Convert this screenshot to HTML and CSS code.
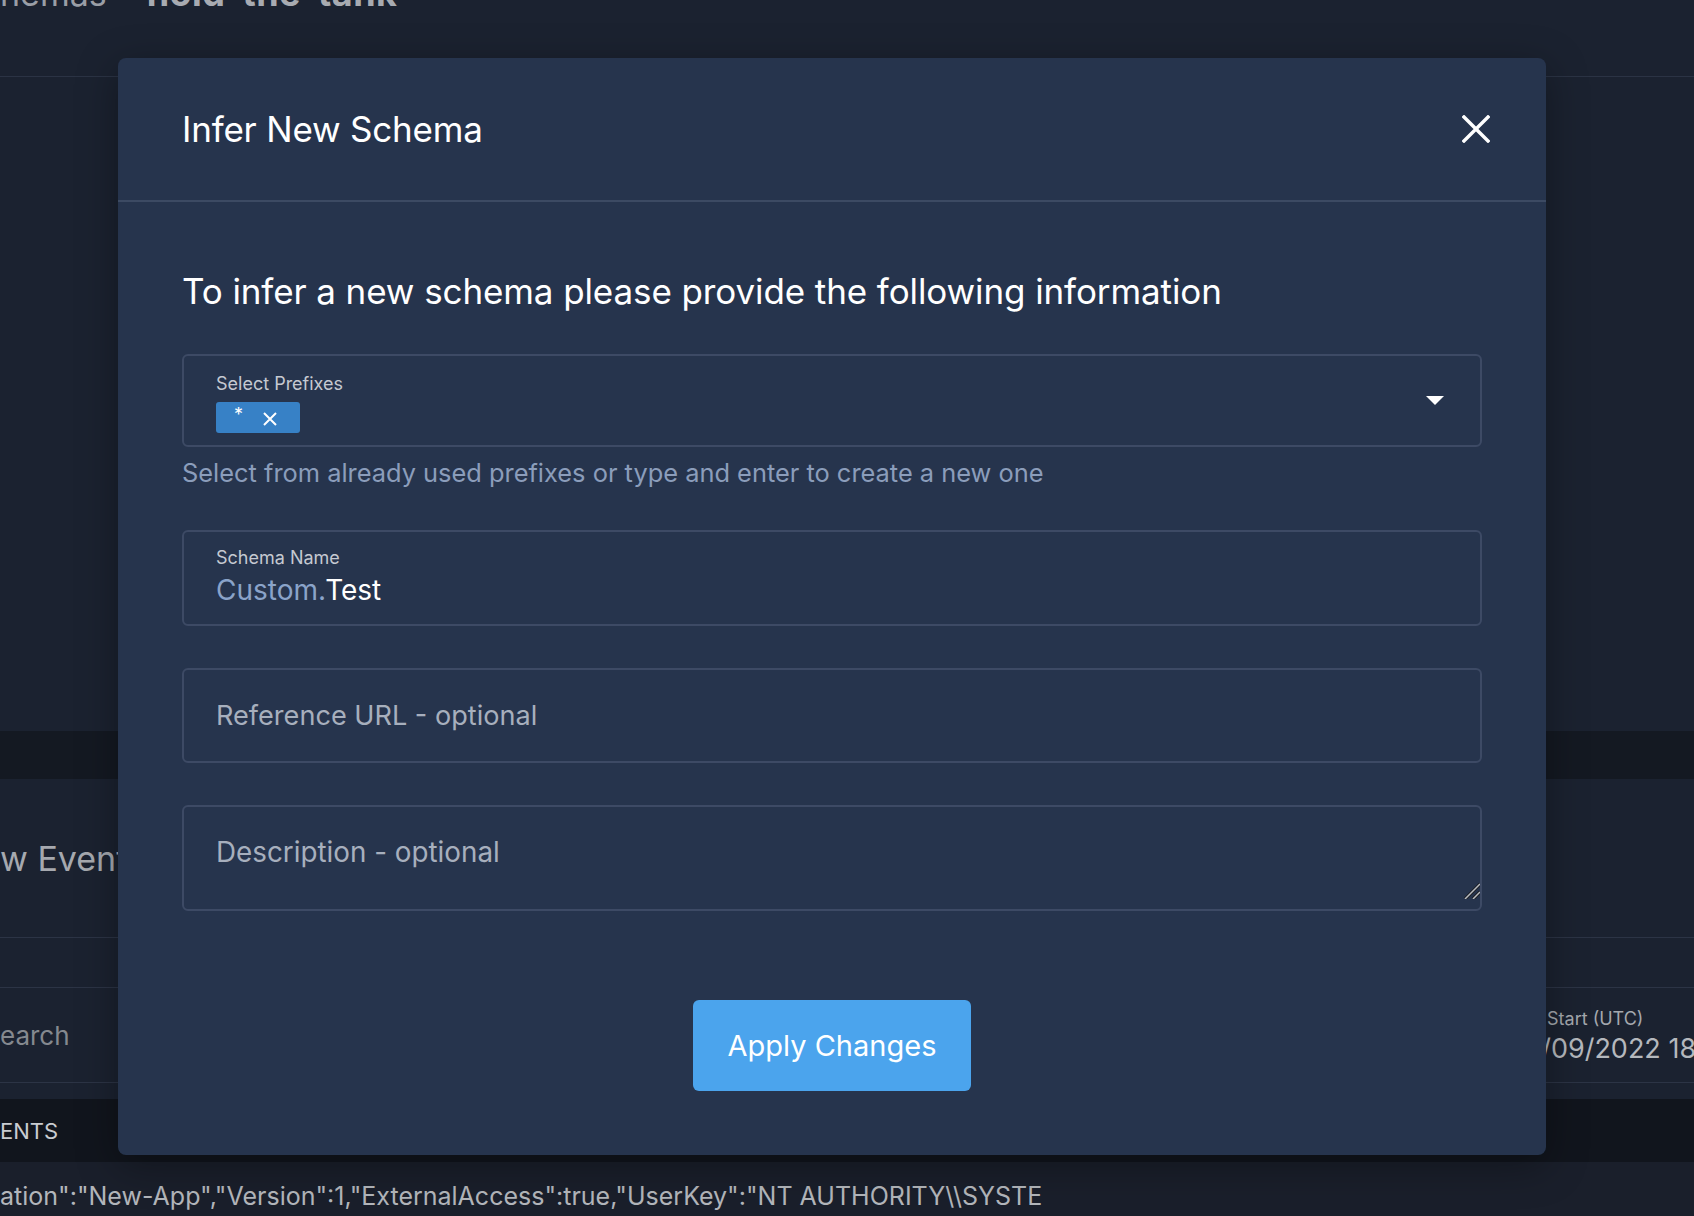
FILE: index.html
```html
<!DOCTYPE html>
<html lang="en">
<head>
<meta charset="utf-8">
<title>Infer New Schema</title>
<link rel="stylesheet" href="styles.css">
</head>
<body>
<div class="page">
  <div class="bg">
    <div class="topbar">
      <div class="crumbs"><span class="crumb">hemas</span><span class="crumb-current">hold-the-tank</span></div>
    </div>
    <div class="bg-main"></div>
    <div class="band"></div>
    <div class="events-title"><span>w Events</span></div>
    <div class="bg-row"></div>
    <div class="search-row">
      <span class="search">earch</span>
      <div class="date-field">
        <span class="date-label">Start (UTC)</span>
        <span class="date-value">28/09/2022 18:00:00</span>
      </div>
    </div>
    <div class="gap"></div>
    <div class="tab-band"><span>ENTS</span></div>
    <div class="json-row"><span class="json-text">ation":"New-App","Version":1,"ExternalAccess":true,"UserKey":"NT AUTHORITY\\SYSTE</span></div>
  </div>

  <div class="modal">
    <header class="modal-header">
      <h2 class="modal-title">Infer New Schema</h2>
      <button class="close" type="button" aria-label="Close">
        <svg width="28" height="28" viewBox="0 0 28 28"><path d="M2 2 L26 26 M26 2 L2 26" stroke="#ffffff" stroke-width="3.4" stroke-linecap="square" fill="none"/></svg>
      </button>
    </header>
    <div class="modal-body">
      <p class="intro">To infer a new schema please provide the following information</p>
      <div class="field select-field">
        <div class="select-main">
          <span class="field-label">Select Prefixes</span>
          <div class="chips">
            <span class="chip"><span class="chip-text">*</span>
              <svg class="chip-x" width="14" height="14" viewBox="0 0 14 14"><path d="M1 1 L13 13 M13 1 L1 13" stroke="#ffffff" stroke-width="2" fill="none"/></svg>
            </span>
          </div>
        </div>
        <svg class="caret" width="18" height="10" viewBox="0 0 18 10"><path d="M0 0 L18 0 L9 9 Z" fill="#ffffff"/></svg>
      </div>
      <p class="helper">Select from already used prefixes or type and enter to create a new one</p>
      <div class="field name-field">
        <span class="field-label">Schema Name</span>
        <div class="name-value"><span class="prefix">Custom.</span><span class="name">Test</span></div>
      </div>
      <div class="field input-field">
        <input class="text-input" type="text" placeholder="Reference URL - optional">
      </div>
      <div class="field textarea-field">
        <textarea class="text-area" placeholder="Description - optional"></textarea>
        <svg class="grip" width="16" height="16" viewBox="0 0 16 16">
          <path d="M1 16 L16 1 M9 16 L16 9" stroke="#1a1c20" stroke-width="3.2" fill="none"/>
          <path d="M1 16 L16 1 M9 16 L16 9" stroke="#b8bbc0" stroke-width="1.5" fill="none"/>
        </svg>
      </div>
      <div class="actions">
        <button class="apply" type="button">Apply Changes</button>
      </div>
    </div>
  </div>
</div>
</body>
</html>
```

FILE: styles.css
```css
* { box-sizing: border-box; }
html, body { margin: 0; padding: 0; }
body {
  width: 1694px;
  height: 1216px;
  overflow: hidden;
  background: #1b2230;
  font-family: "Inter", "Lato", sans-serif;
}
.page {
  position: relative;
  width: 1694px;
  height: 1216px;
  overflow: hidden;
}
.bg {
  display: flex;
  flex-direction: column;
  width: 100%;
  height: 100%;
  background: #1b2230;
}
.topbar {
  height: 77px;
  border-bottom: 1px solid #2b3344;
  overflow: hidden;
}
.crumbs {
  display: flex;
  align-items: baseline;
  gap: 40px;
  margin-top: -27px;
  line-height: 40px;
  font-size: 34px;
  color: #9a9ea6;
}
.crumb-current { font-weight: 700; font-size: 36px; letter-spacing: 0.4px; color: #a8abb1; }
.bg-main { height: 654px; background: #1b2230; }
.band { height: 48px; background: #141922; }
.events-title {
  height: 159px;
  border-bottom: 1px solid #2c3445;
  display: flex;
  align-items: center;
  font-size: 34px;
  color: #a6a9af;
  white-space: nowrap;
}
.bg-row { height: 50px; border-bottom: 1px solid #2c3445; }
.search-row {
  height: 95px;
  border-bottom: 1px solid #2c3445;
  display: flex;
  align-items: center;
  justify-content: space-between;
  white-space: nowrap;
}
.search { font-size: 26px; color: #85898f; }
.date-field {
  display: flex;
  flex-direction: column;
  width: 186px;
  padding-top: 2px;
  gap: 3px;
}
.date-label { font-size: 18px; color: #a4a8ae; padding-left: 39px; }
.date-value { font-size: 27px; color: #b5b8bd; }
.gap { height: 16px; }
.tab-band {
  height: 63px;
  background: #11151d;
  display: flex;
  align-items: center;
  font-size: 22px;
  color: #c9ccd1;
}
.json-row {
  flex: 1;
  background: #1a1f2b;
  display: flex;
  align-items: center;
  padding-top: 14px;
  font-size: 25px;
  color: #b3b6bb;
  white-space: nowrap;
}

/* modal */
.modal {
  position: absolute;
  left: 118px;
  top: 58px;
  width: 1428px;
  height: 1097px;
  background: #26344d;
  border-radius: 8px;
  box-shadow: 0 10px 40px rgba(0,0,0,0.35);
  display: flex;
  flex-direction: column;
}
.modal-header {
  height: 144px;
  flex: none;
  border-bottom: 2px solid #3c4a63;
  display: flex;
  align-items: center;
  justify-content: space-between;
  padding: 0 56px 0 64px;
}
.modal-title {
  margin: 0;
  font-size: 35px;
  font-weight: 400;
  color: #ffffff;
  letter-spacing: -0.2px;
}
.close {
  background: none;
  border: 0;
  padding: 0;
  width: 28px;
  height: 28px;
  display: flex;
}
.modal-body {
  padding: 67px 64px 0 64px;
  display: flex;
  flex-direction: column;
}
.intro {
  margin: 0;
  font-size: 35px;
  line-height: 44px;
  color: #ffffff;
  letter-spacing: -0.1px;
}
.field {
  border: 2px solid #3d4a65;
  border-radius: 6px;
}
.select-field {
  margin-top: 41px;
  height: 93px;
  display: flex;
  align-items: center;
  justify-content: space-between;
  padding: 0 36px 0 32px;
}
.select-main {
  display: flex;
  flex-direction: column;
  gap: 8px;
  padding-top: 5px;
}
.field-label {
  font-size: 18px;
  line-height: 21px;
  color: #c5c9d1;
}
.chips { display: flex; }
.chip {
  width: 84px;
  height: 31px;
  background: #3781c6;
  border-radius: 3px;
  display: flex;
  align-items: center;
  padding-left: 18px;
  gap: 20px;
}
.chip-text {
  font-size: 18px;
  color: #ffffff;
  line-height: 1;
  margin-top: -6px;
}
.chip-x { margin-top: 2px; }
.helper {
  margin: 10px 0 0 0;
  font-size: 25.4px;
  line-height: 32px;
  color: #8b9dbb;
}
.name-field {
  margin-top: 41px;
  height: 96px;
  padding: 15px 32px 0 32px;
  display: flex;
  flex-direction: column;
  gap: 4px;
}
.name-value {
  font-size: 28px;
  line-height: 36px;
}
.prefix { color: #8aa3c9; }
.name { color: #ffffff; }
.input-field {
  margin-top: 42px;
  height: 95px;
  display: flex;
}
.text-input {
  flex: 1;
  background: transparent;
  border: 0;
  outline: none;
  padding: 0 32px;
  font-family: inherit;
  font-size: 27.1px;
  color: #ffffff;
}
.text-input::placeholder, .text-area::placeholder { color: #a7afbd; opacity: 1; }
.textarea-field {
  position: relative;
  margin-top: 42px;
  height: 106px;
  padding-bottom: 10px;
  display: flex;
}
.text-area {
  flex: 1;
  background: transparent;
  border: 0;
  outline: none;
  padding: 27px 32px 0 32px;
  font-family: inherit;
  font-size: 27.8px;
  line-height: 36px;
  color: #ffffff;
  resize: none;
}
.grip {
  position: absolute;
  right: 0;
  bottom: 10px;
  pointer-events: none;
}
.actions {
  margin-top: 89px;
  display: flex;
  justify-content: center;
}
.apply {
  width: 278px;
  height: 91px;
  border: 0;
  border-radius: 6px;
  background: #4ba4ed;
  color: #ffffff;
  font-family: inherit;
  font-size: 29px;
}
```
